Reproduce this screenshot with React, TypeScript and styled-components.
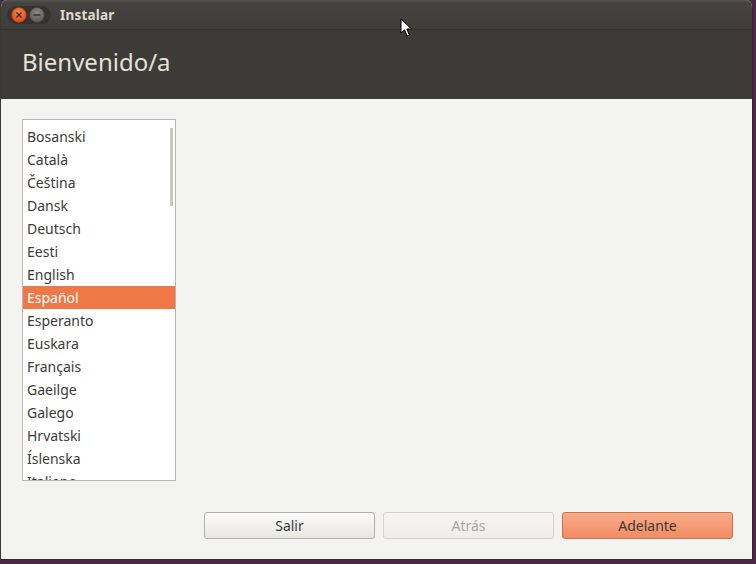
import React from "react";
import styled, { createGlobalStyle } from "styled-components";

const Global = createGlobalStyle`
  html, body { margin: 0; padding: 0; }
  body {
    width: 756px; height: 564px; overflow: hidden;
    background: #4a2843;
    font-family: "Noto Sans", "Open Sans", sans-serif;
  }
`;

const Desktop = styled.div`
  position: relative;
  width: 756px;
  height: 564px;
  background: #4a2843;
`;

const Window = styled.div`
  width: 753px;
  height: 560px;
  display: flex;
  flex-direction: column;
  border-radius: 7px 7px 0 0;
  overflow: hidden;
  background: #f3f3f2;
  border-right: 1px solid #2c2b28;
  border-bottom: 1px solid #2c2b28;
  border-left: 1px solid #3a3935;
  box-sizing: border-box;
`;

const TitleBar = styled.div`
  height: 30px;
  flex: none;
  display: flex;
  align-items: center;
  gap: 8px;
  padding-left: 5px;
  box-sizing: border-box;
  background: linear-gradient(#55534e 0px, #45433f 3px, #3e3d39 100%);
  border-bottom: 1px solid #34332f;
`;

const Controls = styled.svg`
  display: block;
  flex: none;
`;

const TitleText = styled.span`
  font-family: "Noto Sans", "Open Sans", sans-serif;
  font-weight: bold;
  font-size: 13.5px;
  color: #dfdbd2;
  letter-spacing: 0.2px;
`;

const Header = styled.div`
  height: 69px;
  flex: none;
  display: flex;
  align-items: center;
  padding-left: 21px;
  padding-bottom: 6px;
  box-sizing: border-box;
  background: #3c3b37;
`;

const HeaderTitle = styled.h1`
  margin: 0;
  font-family: "Noto Sans", "Open Sans", sans-serif;
  font-weight: normal;
  font-size: 24px;
  color: #e4e1da;
`;

const Body = styled.div`
  flex: 1;
  display: flex;
  flex-direction: column;
  padding: 20px 19px 0 21px;
  background: #f3f3f2;
`;

const ListBox = styled.div`
  position: relative;
  width: 154px;
  height: 362px;
  box-sizing: border-box;
  border: 1px solid #b9b6b1;
  background: #ffffff;
  padding-top: 5px;
  overflow: hidden;
`;

const ScrollThumb = styled.div`
  position: absolute;
  right: 2px;
  top: 8px;
  width: 3px;
  height: 78px;
  background: #cbc7c2;
`;

const Item = styled.div<{ $selected?: boolean }>`
  height: 23px;
  line-height: 23px;
  padding-left: 4px;
  font-size: 14px;
  color: ${(p) => (p.$selected ? "#ffffff" : "#3c3b37")};
  background: ${(p) => (p.$selected ? "#f07746" : "transparent")};
  white-space: nowrap;
`;

const ButtonRow = styled.div`
  display: flex;
  justify-content: flex-end;
  gap: 8px;
  margin-top: 31px;
`;

const Button = styled.div<{ $variant?: "normal" | "disabled" | "primary" }>`
  width: 171px;
  height: 27px;
  box-sizing: border-box;
  border-radius: 3px;
  display: flex;
  align-items: center;
  justify-content: center;
  font-size: 14px;
  font-family: "Noto Sans", "Open Sans", sans-serif;
  ${(p) =>
    p.$variant === "primary"
      ? `background: linear-gradient(#fbab8a, #f08c63);
         border: 1px solid #c6734f;
         color: #3c3b37;`
      : p.$variant === "disabled"
      ? `background: linear-gradient(#f6f5f4, #eeedeb);
         border: 1px solid #d6d3cf;
         color: #a8a6a2;`
      : `background: linear-gradient(#fbfbfa, #e9e7e4);
         border: 1px solid #b2aea8;
         color: #3c3b37;`}
`;

const Cursor = styled.svg`
  position: absolute;
  left: 400px;
  top: 18px;
`;

const languages = [
  "Bosanski",
  "Català",
  "Čeština",
  "Dansk",
  "Deutsch",
  "Eesti",
  "English",
  "Español",
  "Esperanto",
  "Euskara",
  "Français",
  "Gaeilge",
  "Galego",
  "Hrvatski",
  "Íslenska",
  "Italiano",
];

export default function App() {
  return (
    <>
      <Global />
      <Desktop>
        <Window>
          <TitleBar>
            <Controls width="46" height="20" viewBox="0 0 46 20">
              <defs>
                <radialGradient id="cl" cx="50%" cy="35%" r="60%">
                  <stop offset="0%" stopColor="#f7884f" />
                  <stop offset="100%" stopColor="#de4b13" />
                </radialGradient>
                <radialGradient id="mn" cx="50%" cy="35%" r="60%">
                  <stop offset="0%" stopColor="#8a8883" />
                  <stop offset="100%" stopColor="#5e5c58" />
                </radialGradient>
              </defs>
              <rect x="1" y="1" width="44" height="18" rx="9" fill="#34332f" />
              <circle cx="13" cy="10" r="7.5" fill="url(#cl)" stroke="#8c3510" strokeWidth="0.6" />
              <path d="M10.5 7.5 L15.5 12.5 M15.5 7.5 L10.5 12.5" stroke="#3a2218" strokeWidth="1.3" />
              <circle cx="31" cy="10" r="7.5" fill="url(#mn)" stroke="#3a3935" strokeWidth="0.6" />
              <path d="M27.5 10 L34.5 10" stroke="#33322e" strokeWidth="1.4" />
            </Controls>
            <TitleText>Instalar</TitleText>
          </TitleBar>
          <Header>
            <HeaderTitle>Bienvenido/a</HeaderTitle>
          </Header>
          <Body>
            <ListBox>
              {languages.map((l) => (
                <Item key={l} $selected={l === "Español"}>
                  {l}
                </Item>
              ))}
              <ScrollThumb />
            </ListBox>
            <ButtonRow>
              <Button $variant="normal">Salir</Button>
              <Button $variant="disabled">Atrás</Button>
              <Button $variant="primary">Adelante</Button>
            </ButtonRow>
          </Body>
        </Window>
        <Cursor width="14" height="20" viewBox="0 0 14 20">
          <path d="M1 1 L1 15 L4.5 11.8 L7.2 18 L9.4 17 L6.8 11 L11.5 11 Z" fill="#ffffff" stroke="#000000" strokeWidth="1" strokeLinejoin="round" />
        </Cursor>
      </Desktop>
    </>
  );
}
